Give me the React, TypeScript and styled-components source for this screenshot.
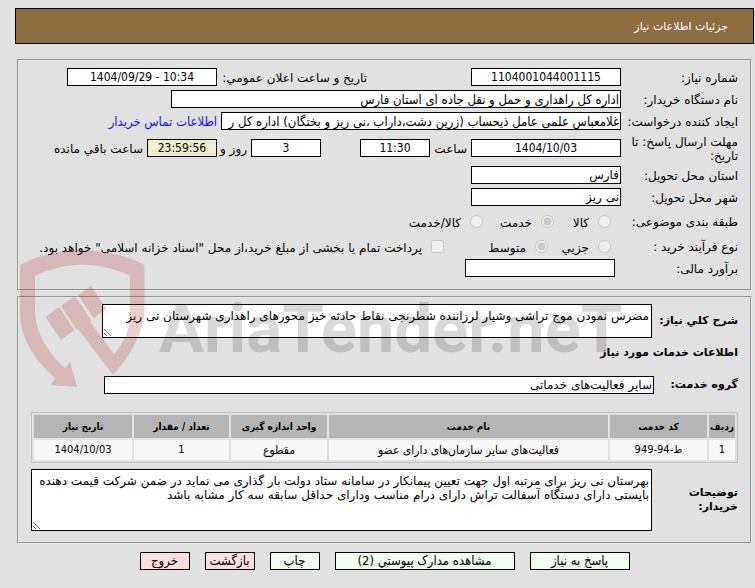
import React from 'react';
import styled, { createGlobalStyle } from 'styled-components';

const condensed = '"DejaVu Sans Condensed", "DejaVu Sans", sans-serif';

const GlobalStyle = createGlobalStyle`
  * { box-sizing: border-box; }
  body {
    margin: 0;
    background: #e1e1e1;
    color: #000;
    font: 12px/14px "DejaVu Sans", sans-serif;
  }
  input, textarea, button { font: inherit; color: inherit; }
`;

const Page = styled.main`
  position: relative;
  padding: 8px 1px 16px 15px;
`;

const Header = styled.header`
  display: flex;
  align-items: center;
  height: 36px;
  padding: 2px 25px 0;
  border: 1px solid #000;
  background: #8f6d40;
`;

const Title = styled.h1`
  margin: 0;
  font-size: 11px;
  font-weight: normal;
  color: #fff;
`;

const Panel = styled.section<{ $top: number; $inset: number }>`
  margin: ${(p) => p.$top}px 2px 0;
  padding: ${(p) => p.$inset}px 12px 11px;
  border: 2px groove #e8e8e8;
`;

const Row = styled.div<{ $height: number }>`
  display: flex;
  align-items: center;
  height: ${(p) => p.$height}px;
  white-space: nowrap;
`;

const Label = styled.label`
  flex: none;
  width: 117px;
  padding-top: 2px;
  white-space: normal;
`;

const GroupLabel = styled.span`
  flex: none;
  width: 117px;
  padding-top: 2px;
`;

const Field = styled.input<{ $width: number; $center?: boolean; $shade?: boolean; $gap?: number }>`
  flex: none;
  width: ${(p) => p.$width}px;
  height: 18px;
  margin-right: ${(p) => p.$gap ?? 0}px;
  padding: 0 1px;
  border: 1px solid #000;
  border-radius: 0;
  background: ${(p) => (p.$shade ? '#eeeecc' : '#fff')};
  font-family: ${(p) => (p.$center ? condensed : 'inherit')};
  line-height: 16px;
  text-align: ${(p) => (p.$center ? 'center' : 'start')};
`;

const LongField = styled(Field)`
  font-family: ${condensed};
  font-size: 13px;
`;

const Between = styled.label<{ $width: number; $gap?: number }>`
  flex: none;
  width: ${(p) => p.$width}px;
  margin-inline-start: ${(p) => p.$gap ?? 0}px;
  padding: 2px 4px 0 0;
`;

const ContactLink = styled.a`
  padding: 2px 4px 0 0;
  color: #1414ff;
  font-family: ${condensed};
  font-size: 13px;
  text-decoration: none;
`;

const Choice = styled.label<{ $width: number }>`
  display: flex;
  flex: none;
  align-items: center;
  gap: 9px;
  width: ${(p) => p.$width}px;
  padding-right: 10px;

  input { flex: none; width: 13px; height: 13px; margin: 0; }
  span { padding-top: 4px; }
`;

const Strong = styled.label`
  flex: none;
  width: 84px;
  font-size: 11px;
  font-weight: bold;
`;

const Subtitle = styled.h2`
  margin: 0;
  padding-top: 7px;
  font-size: 11px;
  line-height: 16px;
`;

const Block = styled.div<{ $top: number }>`
  display: flex;
  align-items: center;
  padding-top: ${(p) => p.$top}px;
`;

const Area = styled.textarea<{ $height: number; $end: number }>`
  flex: 1;
  min-width: 0;
  height: ${(p) => p.$height}px;
  margin: 0 2px 0 ${(p) => p.$end}px;
  padding: 4px 2px;
  border: 1px solid #000;
  border-radius: 0;
  background: #fff;
  overflow: hidden;
  resize: both;
`;

const GroupField = styled(Field)`
  flex: 1;
  min-width: 0;
  margin-left: 73px;
`;

const Table = styled.table`
  width: 100%;
  margin-top: 18px;
  border: 1px solid #c0c0c0;
  border-collapse: separate;
  border-spacing: 2px;
  table-layout: fixed;
  font-family: ${condensed};
  font-size: 11px;
  text-align: center;

  th, td { padding: 0; white-space: nowrap; }
  th { height: 23px; background: #b5b5b5; font-size: 10px; }
  td { height: 20px; background: #f7f7f7; }
  td:nth-child(3), td:nth-child(4) { font-size: 12px; }
`;

const Actions = styled.nav`
  display: flex;
  justify-content: center;
  gap: 15px;
  margin-top: 8px;
`;

const Action = styled.button<{ $width: number; $red?: boolean }>`
  width: ${(p) => p.$width}px;
  height: 18px;
  padding: 0;
  border: 1px solid #000;
  background: ${(p) => (p.$red ? '#ffdddd' : '#eeffee')};
  font-family: ${condensed};
  font-size: 13px;
  line-height: 16px;
`;

const Watermark = styled.svg`
  position: absolute;
  top: 245px;
  left: 18px;
  width: 606px;
  height: 145px;
  pointer-events: none;
`;

const columns: [string, string, string][] = [
  ['ردیف', '26px', '1'],
  ['کد خدمت', '97px', 'ط-94-949'],
  ['نام خدمت', 'auto', 'فعالیت‌های سایر سازمان‌های دارای عضو'],
  ['واحد اندازه گیری', '96px', 'مقطوع'],
  ['تعداد / مقدار', '95px', '1'],
  ['تاریخ نیاز', '98px', '1404/10/03'],
];

function BrandMark() {
  return (
    <Watermark viewBox="18 245 606 145" direction="ltr" aria-hidden="true">
      <g fill="#aa1419" fillOpacity="0.2">
        <path d="M20 265C55 246 108 245 144.500 265V310C144 332 131 355 113 375L78 329L76 329L61 306L75 296L91 320L90 322L114 354C125 342 130 330 130 310V276C100 261 65 261 35 276V310C35 333 48 353 65 368L70 362L77 387L51 385L55 378C32 358 20 336 20 312Z" />
        <path d="M45.500 317L59 307L74.500 330L61 340ZM78 295L91 286L106.500 309L93.500 318Z" />
      </g>
      <text
        x="159"
        y="352"
        fill="#000"
        fillOpacity="0.15"
        fontFamily="Roboto, sans-serif"
        fontWeight="bold"
        fontSize="67"
      >
        AriaTender.neT
      </text>
    </Watermark>
  );
}

export default function App() {
  return (
    <>
      <GlobalStyle />
      <Page dir="rtl" lang="fa">
        <Header><Title>جزئیات اطلاعات نیاز</Title></Header>

        <Panel $top={15} $inset={5}>
          <Row $height={22}>
            <Label htmlFor="number">شماره نیاز:</Label>
            <Field id="number" $width={150} $center readOnly defaultValue="1104001044001115" />
            <Between htmlFor="announce" $width={154} $gap={100}>تاریخ و ساعت اعلان عمومي:</Between>
            <Field id="announce" dir="ltr" $width={150} $center readOnly defaultValue="1404/09/29 - 10:34" />
          </Row>
          <Row $height={22}>
            <Label htmlFor="buyer">نام دستگاه خریدار:</Label>
            <LongField id="buyer" $width={450} readOnly defaultValue="اداره کل راهداری و حمل و نقل جاده ای استان فارس" />
          </Row>
          <Row $height={22}>
            <Label htmlFor="creator">ایجاد کننده درخواست:</Label>
            <LongField id="creator" $width={400} readOnly defaultValue="غلامعباس علمی عامل ذیحساب (زرین دشت،داراب ،نی ریز و بختگان) اداره کل ر" />
            <ContactLink href="#contact">اطلاعات تماس خریدار</ContactLink>
          </Row>
          <Row $height={32}>
            <Label htmlFor="deadline">مهلت ارسال پاسخ: تا تاریخ:</Label>
            <Field id="deadline" dir="ltr" $width={150} $center readOnly defaultValue="1404/10/03" />
            <Between htmlFor="hour" $width={41}>ساعت</Between>
            <Field id="hour" $width={70} $center readOnly defaultValue="11:30" />
            <Field id="days" $width={70} $gap={39} $center readOnly defaultValue="3" />
            <Between htmlFor="days" $width={34}>روز و</Between>
            <Field id="left" $width={70} $center $shade readOnly defaultValue="23:59:56" />
            <Between htmlFor="left" $width={100}>ساعت باقي مانده</Between>
          </Row>
          <Row $height={22}>
            <Label htmlFor="province">استان محل تحویل:</Label>
            <Field id="province" $width={150} readOnly defaultValue="فارس" />
          </Row>
          <Row $height={22}>
            <Label htmlFor="city">شهر محل تحویل:</Label>
            <Field id="city" $width={150} readOnly defaultValue="نی ریز" />
          </Row>
          <Row $height={26}>
            <GroupLabel>طبقه بندی موضوعی:</GroupLabel>
            <Choice $width={57}><input type="radio" name="subject" disabled /><span>کالا</span></Choice>
            <Choice $width={71}><input type="radio" name="subject" disabled defaultChecked /><span>خدمت</span></Choice>
            <Choice $width={110}><input type="radio" name="subject" disabled /><span>کالا/خدمت</span></Choice>
          </Row>
          <Row $height={24}>
            <GroupLabel>نوع فرآیند خرید :</GroupLabel>
            <Choice $width={63}><input type="radio" name="process" disabled /><span>جزیي</span></Choice>
            <Choice $width={104}><input type="radio" name="process" disabled defaultChecked /><span>متوسط</span></Choice>
            <Choice $width={418}><input type="checkbox" disabled /><span>پرداخت تمام یا بخشی از مبلغ خرید،از محل "اسناد خزانه اسلامی" خواهد بود.</span></Choice>
          </Row>
          <Row $height={20}>
            <Label htmlFor="estimate">برآورد مالی:</Label>
            <Field id="estimate" $width={150} $gap={6} readOnly defaultValue="" />
          </Row>
        </Panel>

        <Panel $top={5} $inset={6}>
          <Block $top={0}>
            <Strong htmlFor="summary">شرح کلي نیاز:</Strong>
            <Area id="summary" $height={34} $end={71} readOnly defaultValue="مضرس نمودن موج تراشی وشیار لرزاننده شطرنجی نقاط حادثه خیز محورهای راهداری شهرستان نی ریز" />
          </Block>
          <Subtitle>اطلاعات خدمات مورد نیاز</Subtitle>
          <Block $top={15}>
            <Strong htmlFor="group">گروه خدمت:</Strong>
            <GroupField id="group" $width={550} readOnly defaultValue="سایر فعالیت‌های خدماتی" />
          </Block>
          <Table>
            <colgroup>{columns.map(([name, width]) => <col key={name} width={width} />)}</colgroup>
            <thead><tr>{columns.map(([name]) => <th key={name} scope="col">{name}</th>)}</tr></thead>
            <tbody><tr>{columns.map(([name, , value]) => <td key={name}>{value}</td>)}</tr></tbody>
          </Table>
          <Block $top={6}>
            <Strong htmlFor="notes">توضیحات خریدار:</Strong>
            <Area id="notes" $height={62} $end={0} readOnly defaultValue="بهرستان نی ریز برای مرتبه اول جهت تعیین پیمانکار در سامانه ستاد دولت بار گذاری می نماید در ضمن شرکت قیمت دهنده بایستی دارای دستگاه آسفالت تراش دارای درام مناسب ودارای حداقل سابقه سه کار مشابه باشد" />
          </Block>
        </Panel>

        <Actions>
          <Action type="button" $width={100}>پاسخ به نیاز</Action>
          <Action type="button" $width={180}>مشاهده مدارک پیوستي (2)</Action>
          <Action type="button" $width={50}>چاپ</Action>
          <Action type="button" $width={50} $red>بازگشت</Action>
          <Action type="button" $width={50} $red>خروج</Action>
        </Actions>

        <BrandMark />
      </Page>
    </>
  );
}
